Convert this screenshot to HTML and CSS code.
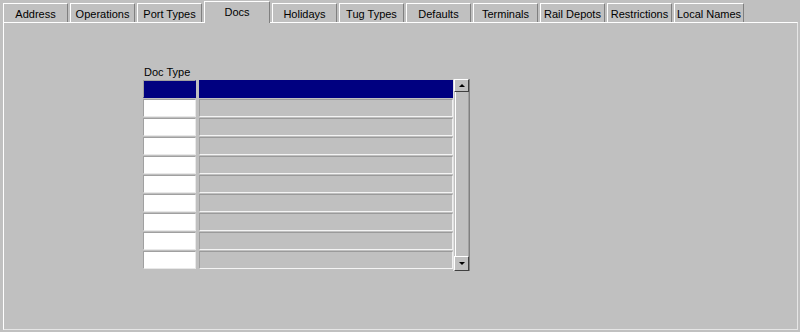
FILE: index.html
```html
<!DOCTYPE html>
<html>
<head>
<meta charset="utf-8">
<link rel="stylesheet" href="styles.css">
</head>
<body>
<div class="window">
  <div class="tabs">
    <div class="tab">Address</div>
    <div class="tab">Operations</div>
    <div class="tab">Port Types</div>
    <div class="tab active">Docs</div>
    <div class="tab">Holidays</div>
    <div class="tab">Tug Types</div>
    <div class="tab">Defaults</div>
    <div class="tab">Terminals</div>
    <div class="tab">Rail Depots</div>
    <div class="tab">Restrictions</div>
    <div class="tab wide">Local Names</div>
  </div>
  <div class="panel">
    <div class="grid">
      <div class="label">Doc Type</div>
      <div class="table">
        <div class="rows">
          <div class="row selected"><div class="c1"></div><div class="c2"></div></div>
          <div class="row"><div class="c1"></div><div class="c2"></div></div>
          <div class="row"><div class="c1"></div><div class="c2"></div></div>
          <div class="row"><div class="c1"></div><div class="c2"></div></div>
          <div class="row"><div class="c1"></div><div class="c2"></div></div>
          <div class="row"><div class="c1"></div><div class="c2"></div></div>
          <div class="row"><div class="c1"></div><div class="c2"></div></div>
          <div class="row"><div class="c1"></div><div class="c2"></div></div>
          <div class="row"><div class="c1"></div><div class="c2"></div></div>
          <div class="row"><div class="c1"></div><div class="c2"></div></div>
        </div>
        <div class="scrollbar">
          <div class="sbtn"><span class="arrow up"></span></div>
          <div class="track"></div>
          <div class="sbtn"><span class="arrow down"></span></div>
        </div>
      </div>
    </div>
  </div>
</div>
</body>
</html>
```
FILE: styles.css
```css
html, body {
  margin: 0;
  padding: 0;
  background: #c0c0c0;
  width: 800px;
  height: 332px;
  overflow: hidden;
  font-family: "Liberation Sans", Arial, sans-serif;
  color: #000;
}
.window {
  display: flex;
  flex-direction: column;
  height: 332px;
}
.tabs {
  display: flex;
  align-items: flex-end;
  height: 22px;
  padding-left: 3px;
  position: relative;
  z-index: 1;
}
.tab {
  box-sizing: border-box;
  width: 65px;
  height: 19px;
  margin-right: 2px;
  border-top: 1px solid #ffffff;
  border-left: 1px solid #ffffff;
  border-right: 1px solid #808080;
  background: #c0c0c0;
  font-size: 11px;
  line-height: 20px;
  text-align: center;
  white-space: nowrap;
}
.tab.wide { width: 70px; }
.tab.active {
  height: 22px;
  margin-bottom: -1px;
  line-height: 20px;
  width: 66px;
  margin-right: 2px;
}
.panel {
  box-sizing: border-box;
  margin: 0 2px 0 3px;
  height: 308px;
  border-top: 1px solid #ffffff;
  border-left: 1px solid #ffffff;
  border-right: 1px solid #e6e6e6;
  border-bottom: 1px solid #e6e6e6;
  padding: 43px 0 0 139px;
}
.grid {
  display: flex;
  flex-direction: column;
}
.label {
  font-size: 11px;
  line-height: 13px;
  height: 13px;
  padding-left: 1px;
}
.table {
  display: flex;
}
.rows {
  display: flex;
  flex-direction: column;
  padding-top: 1px;
}
.row {
  display: flex;
  gap: 3px;
  height: 18px;
  margin-bottom: 1px;
}
.c1 {
  box-sizing: border-box;
  width: 53px;
  height: 18px;
  background: #ffffff;
  border-top: 1px solid #a0a0a0;
  border-left: 1px solid #a0a0a0;
  border-right: 1px solid #e8e8e8;
  border-bottom: 1px solid #e8e8e8;
}
.c2 {
  box-sizing: border-box;
  width: 254px;
  height: 18px;
  background: #c0c0c0;
  border-top: 1px solid #9a9a9a;
  border-left: 1px solid #a0a0a0;
  border-right: 1px solid #f0f0f0;
  border-bottom: 1px solid #f4f4f4;
}
.row.selected .c1,
.row.selected .c2 {
  background: #000080;
  border-color: #000080;
}
.row.selected .c1 { border-left-color: #a0a0a0; border-top-color: #a0a0a0; }
.scrollbar {
  box-sizing: border-box;
  width: 17px;
  height: 192px;
  display: flex;
  flex-direction: column;
  background: #c0c0c0;
  border-right: 1px solid #808080;
  border-left: 1px solid #e0e0e0;
}
.sbtn {
  box-sizing: border-box;
  height: 13px;
  background: #c0c0c0;
  border-top: 1px solid #ffffff;
  border-left: 1px solid #ffffff;
  border-right: 1px solid #404040;
  border-bottom: 1px solid #404040;
  display: flex;
  align-items: center;
  justify-content: center;
}
.sbtn:last-child { height: 15px; }
.track {
  flex: 1;
  border-left: 1px solid #ffffff;
  margin-left: 1px;
  border-right: 1px solid #a0a0a0;
}
.arrow {
  width: 0;
  height: 0;
  border-left: 3px solid transparent;
  border-right: 3px solid transparent;
}
.arrow.up { border-bottom: 3px solid #000; }
.arrow.down { border-top: 3px solid #000; }
```
